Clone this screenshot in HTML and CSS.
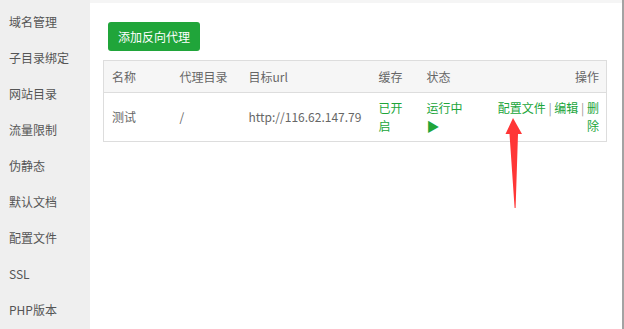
FILE: index.html
```html
<!DOCTYPE html>
<html>
<head>
<meta charset="utf-8">
<link rel="stylesheet" href="styles.css">
</head>
<body>
<div class="page">
  <ul class="side">
    <li>域名管理</li>
    <li>子目录绑定</li>
    <li>网站目录</li>
    <li>流量限制</li>
    <li>伪静态</li>
    <li>默认文档</li>
    <li>配置文件</li>
    <li>SSL</li>
    <li>PHP版本</li>
  </ul>
  <div class="main">
    <button class="btn">添加反向代理</button>
    <table class="tbl">
      <colgroup>
        <col class="c1"><col class="c2"><col class="c3"><col class="c4"><col class="c5"><col>
      </colgroup>
      <thead>
        <tr><th>名称</th><th>代理目录</th><th>目标url</th><th>缓存</th><th>状态</th><th class="r">操作</th></tr>
      </thead>
      <tbody>
        <tr>
          <td>测试</td>
          <td>/</td>
          <td>http://116.62.147.79</td>
          <td class="g">已开启</td>
          <td class="g">运行中 <span class="play">▶</span></td>
          <td class="r g">配置文件 <span class="sep">|</span> 编辑 <span class="sep">|</span> 删除</td>
        </tr>
      </tbody>
    </table>
  </div>
  <div class="scroll"></div>
  <svg class="arrow" width="30" height="100" viewBox="500 110 30 100">
    <path d="M513 118 L522 134 L518 134 L515.6 208 L514.6 208 L509.5 134 L505.5 134 Z" fill="#ff3636"/>
  </svg>
</div>
</body>
</html>
```
FILE: styles.css
```css
html, body {
  margin: 0;
  padding: 0;
  height: 100%;
  overflow: hidden;
}
body {
  font-family: "Noto Sans CJK SC", "Noto Sans", sans-serif;
  font-size: 12px;
  color: #666;
}
.page {
  display: flex;
  height: 329px;
  position: relative;
}
.side {
  list-style: none;
  margin: 0;
  padding: 4px 0 0 0;
  width: 90px;
  background: #efefef;
  flex: none;
}
.side li {
  height: 36px;
  line-height: 36px;
  padding-left: 9px;
  color: #555;
  white-space: nowrap;
}
.main {
  flex: 1;
  background: #fff;
  border-top: 3px solid #f5f5f5;
  padding: 19px 15px 0 13px;
}
.btn {
  display: block;
  margin-left: 5px;
  height: 29px;
  width: 92px;
  padding: 0;
  border: 0;
  border-radius: 3px;
  background: #20a53a;
  color: #fff;
  font-family: inherit;
  font-size: 12px;
  margin-bottom: 9px;
}
.tbl {
  width: 504px;
  border-collapse: collapse;
  border: 1px solid #ddd;
  table-layout: fixed;
}
.c1 { width: 68px; }
.c2 { width: 69px; }
.c3 { width: 130px; }
.c4 { width: 48px; }
.c5 { width: 68px; }
.tbl th {
  background: #f6f6f6;
  font-weight: normal;
  text-align: left;
  height: 31px;
  padding: 0 8px;
  border-bottom: 1px solid #ddd;
  color: #666;
}
.tbl td {
  padding: 6px 8px 6px 8px;
  line-height: 18px;
  height: 36px;
  vertical-align: middle;
  color: #666;
}
.tbl .r { text-align: right; padding-right: 7px; padding-left: 4px; }
.tbl .g { color: #20a53a; }
.play { display: block; font-size: 13px; }
.sep { color: #999; }
.scroll {
  width: 3px;
  flex: none;
  background: #a3a3a3;
}
.arrow {
  position: absolute;
  left: 500px;
  top: 110px;
}
```
